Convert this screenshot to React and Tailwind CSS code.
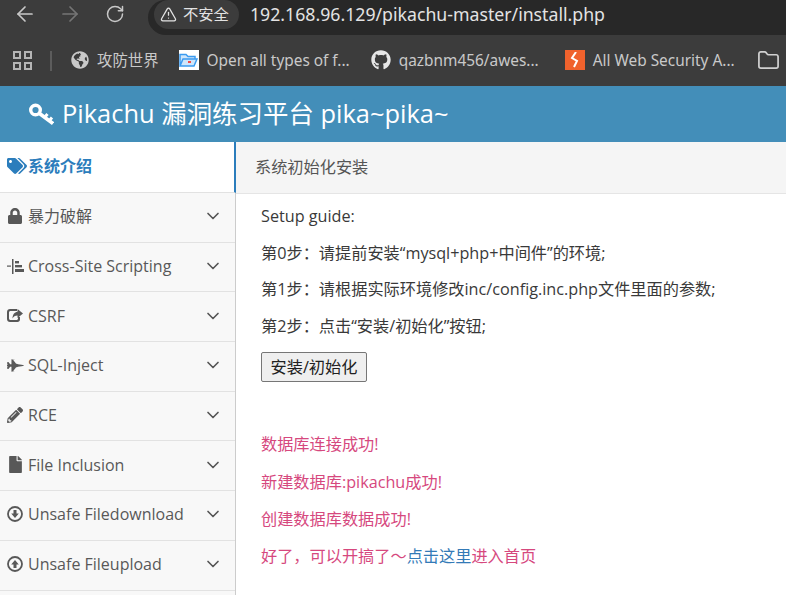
import React from "react"
import { ArrowLeft, ArrowRight, RotateCw, TriangleAlert, Folder, ChevronDown } from "lucide-react"
import { FaTags, FaLock, FaFighterJet, FaPencilAlt, FaFile, FaGithub, FaGlobeAmericas } from "react-icons/fa"

const OPEN_SANS = "font-['Open_Sans','Noto_Sans_CJK_SC',sans-serif]"

const KeyIcon = () => (
  <svg width="25" height="22" viewBox="0 0 25 22" fill="none" stroke="white" className="mr-[8px]">
    <circle cx="6.500" cy="7" r="4.800" strokeWidth="3.400" />
    <path d="M10.500 10.500L24 20.500" strokeWidth="3.600" />
    <path d="M15.500 14.500l3-3.500M20 18l3-3.500" strokeWidth="3" />
  </svg>
)

const IndentIcon = () => (
  <svg width="18" height="15" viewBox="0 0 18 15" fill="currentColor">
    <rect x="5" y="0" width="1.500" height="15" />
    <rect x="0" y="6.500" width="4" height="1.200" />
    <rect x="8" y="2" width="4" height="2.400" />
    <rect x="8" y="6" width="7" height="2.400" />
    <rect x="8" y="10" width="9" height="3" />
  </svg>
)

const ShareIcon = () => (
  <svg width="16" height="15" viewBox="0 0 16 15" fill="currentColor">
    <path d="M3 1h7v2H3.500C2.700 3 2 3.700 2 4.500v6C2 11.300 2.700 12 3.500 12h6c.8 0 1.500-.7 1.500-1.500V9h2v2.500C13 13 11.900 14 10.500 14h-7.500C1.300 14 0 12.800 0 11V4C0 2.300 1.300 1 3 1z" />
    <path d="M10.500 1L16 5.500 10.500 10V7.500C8 7.500 6.500 8.500 5.500 10.500 5.500 7 7.500 4 10.500 3.800z" />
  </svg>
)

const CircleArrowIcon = ({ up }) => (
  <svg width="16" height="16" viewBox="0 0 16 16" fill="none" className={up ? "rotate-180" : ""}>
    <circle cx="8" cy="8" r="7" stroke="currentColor" strokeWidth="1.800" />
    <path d="M6.500 4h3v3.500H11.800L8 12 4.200 7.500h2.300z" fill="currentColor" />
  </svg>
)

const navItems = [
  { label: "暴力破解", icon: <FaLock size={16} /> },
  { label: "Cross-Site Scripting", icon: <IndentIcon /> },
  { label: "CSRF", icon: <ShareIcon /> },
  { label: "SQL-Inject", icon: <FaFighterJet size={17} /> },
  { label: "RCE", icon: <FaPencilAlt size={16} /> },
  { label: "File Inclusion", icon: <FaFile size={17} /> },
  { label: "Unsafe Filedownload", icon: <CircleArrowIcon /> },
  { label: "Unsafe Fileupload", icon: <CircleArrowIcon up /> },
]

const Bookmark = ({ icon, label, className }) => (
  <div className={`flex items-center gap-2 shrink-0 ${className}`}>
    {icon}
    <span className="text-[15.400px] text-[#c9c9c9] whitespace-nowrap">{label}</span>
  </div>
)

const BrowserChrome = () => (
  <div className="h-[86px] shrink-0 bg-[#3c3c3c] font-['Noto_Sans','Noto_Sans_CJK_SC',sans-serif]">
    <div className="h-[35px] flex items-center">
      <div className="flex items-center pb-[8px]">
        <ArrowLeft size={24} strokeWidth={1.700} className="ml-[13px] text-[#c8c8c8]" />
        <ArrowRight size={24} strokeWidth={1.700} className="ml-[21px] text-[#757575]" />
        <RotateCw size={20} strokeWidth={1.800} className="ml-[23px] text-[#c8c8c8]" />
      </div>
      <div className="ml-[23px] flex-1 h-[35px] flex items-center bg-[#282828] rounded-l-[18px] pl-[6px] pb-[6px]">
        <div className="h-[29px] w-[85px] flex items-center gap-[6px] bg-[#3c3c3c] rounded-full pl-[6px]">
          <TriangleAlert size={17} strokeWidth={1.800} className="text-[#e3e3e3]" />
          <span className="text-[15.300px] text-[#e3e3e3]">不安全</span>
        </div>
        <span className="ml-[11px] text-[17.700px] text-[#e3e3e3] whitespace-nowrap">192.168.96.129/pikachu-master/install.php</span>
      </div>
    </div>
    <div className="h-[51px] flex items-center overflow-hidden">
      <div className="ml-[13px] grid grid-cols-2 gap-[3px] shrink-0">
        <span className="size-2 border-2 border-[#b5b5b5]" />
        <span className="size-2 border-2 border-[#b5b5b5]" />
        <span className="size-2 border-2 border-[#b5b5b5]" />
        <span className="size-2 border-2 border-[#b5b5b5]" />
      </div>
      <div className="ml-[18px] w-[2px] h-5 bg-[#5c5c5c] shrink-0" />
      <Bookmark className="ml-[19px]" icon={<FaGlobeAmericas size={18} className="text-[#c9c9c9]" />} label="攻防世界" />
      <Bookmark
        className="ml-[20px]"
        icon={
          <span className="size-5 bg-white flex items-center justify-center">
            <svg width="19" height="15" viewBox="0 0 19 15" fill="#cfe6fb" stroke="#3b9bf0" strokeWidth="1.500">
              <path d="M1 13V1.500h6l2 2h7v2.500M1 13l3-7h14l-3 7z" />
              <rect x="9" y="8" width="3" height="2" fill="#f04b4b" stroke="none" />
            </svg>
          </span>
        }
        label="Open all types of f..."
      />
      <Bookmark className="ml-[21px]" icon={<FaGithub size={20} className="text-[#e6e6e6]" />} label="qazbnm456/awes..." />
      <Bookmark
        className="ml-[26px]"
        icon={
          <span className="size-5 bg-[#f0622d] flex items-center justify-center">
            <svg width="12" height="16" viewBox="0 0 12 16" fill="none" stroke="white" strokeWidth="2">
              <path d="M7 0L3 6l5 3-3 6" />
            </svg>
          </span>
        }
        label="All Web Security A..."
      />
      <Folder size={23} strokeWidth={1.800} className="ml-[22px] shrink-0 text-[#d0d0d0]" />
    </div>
  </div>
)

const Sidebar = () => (
  <aside className="w-[236px] shrink-0 bg-[#f8f8f8] border-r border-[#cccccc]">
    <div className="h-[51px] -mr-px pb-[2px] bg-white border-b border-[#e2e2e2] border-r-2 border-r-[#2b7dbc] flex items-center font-bold text-[#2b7dbc]">
      <FaTags size={20} className="ml-[7px] mr-px" />
      <span className="text-base">系统介绍</span>
    </div>
    {navItems.map((item) => (
      <div key={item.label} className="h-[49.700px] border-b border-[#e2e2e2] flex items-center text-[#585858] pb-[2px]">
        <span className="w-[28px] pl-[7px] shrink-0 flex items-center">{item.icon}</span>
        <span className="flex-1 text-base leading-none whitespace-nowrap">{item.label}</span>
        <ChevronDown size={20} strokeWidth={2} className="mr-[12px] text-[#555555]" />
      </div>
    ))}
  </aside>
)

const Content = () => (
  <main className="flex-1 min-w-0 bg-white text-[16.200px] text-[#393939]">
    <div className="h-[52px] bg-[#f5f5f5] border-b border-[#e5e5e5] flex items-center pl-[19px] text-[#555555]">
      系统初始化安装
    </div>
    <div className="pl-[25px] pt-[12px]">
      <p className="h-[36.600px] leading-[21px] whitespace-nowrap">Setup guide:</p>
      <p className="h-[36.600px] leading-[21px] whitespace-nowrap">第0步：请提前安装“mysql+php+中间件”的环境;</p>
      <p className="h-[36.600px] leading-[21px] whitespace-nowrap">第1步：请根据实际环境修改inc/config.inc.php文件里面的参数;</p>
      <p className="h-[36.600px] leading-[21px] whitespace-nowrap">第2步：点击“安装/初始化”按钮;</p>
      <button className="block w-[106px] h-[30px] bg-[#efefef] border border-[#767676] rounded-[2px] text-[#212121]">
        安装/初始化
      </button>
      <div className="mt-[52px] text-[#d6487e]">
        <p className="h-[37.200px] leading-[21px] whitespace-nowrap">数据库连接成功!</p>
        <p className="h-[37.200px] leading-[21px] whitespace-nowrap">新建数据库:pikachu成功!</p>
        <p className="h-[37.200px] leading-[21px] whitespace-nowrap">创建数据库数据成功!</p>
        <p className="h-[37.200px] leading-[21px] whitespace-nowrap">
          好了，可以开搞了～<a className="text-[#337ab7]">点击这里</a>进入首页
        </p>
      </div>
    </div>
  </main>
)

export default function App() {
  return (
    <div className={`w-[786px] h-[595px] overflow-hidden flex flex-col ${OPEN_SANS}`}>
      <BrowserChrome />
      <header className="h-[56px] shrink-0 bg-[#438eb9] flex items-center pl-[29px] text-white">
        <KeyIcon />
        <span className="text-[25.450px] leading-none whitespace-nowrap">Pikachu 漏洞练习平台 pika~pika~</span>
      </header>
      <div className="flex-1 min-h-0 flex">
        <Sidebar />
        <Content />
      </div>
    </div>
  )
}
